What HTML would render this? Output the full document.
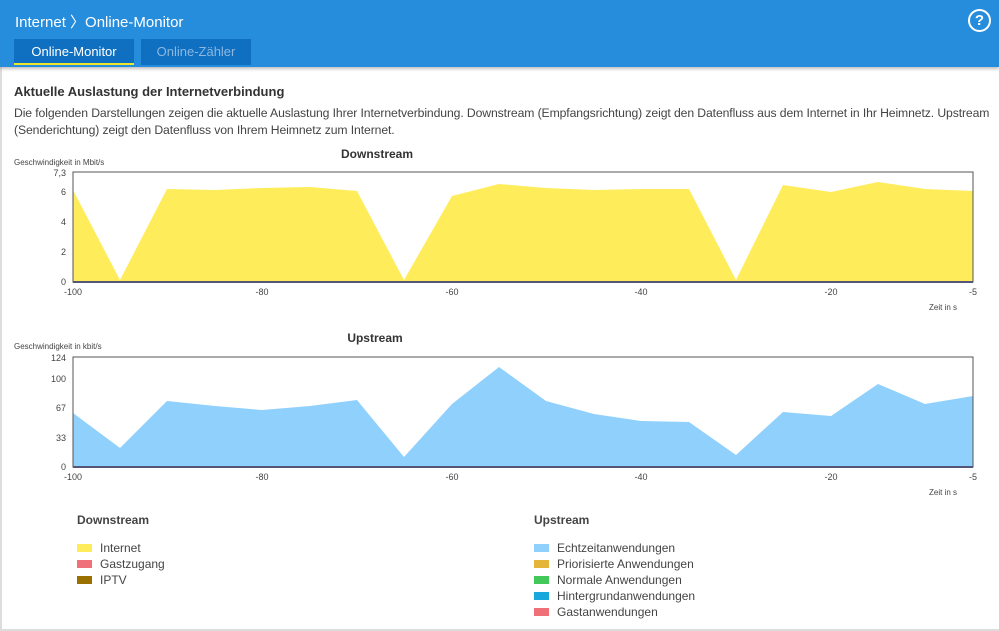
<!DOCTYPE html>
<html><head><meta charset="utf-8"><style>
body{margin:0;width:999px;height:631px;overflow:hidden;background:#fff;font-family:"Liberation Sans",sans-serif;color:#333;position:relative}
.hdr{position:absolute;left:0;top:0;width:999px;height:67px;background:#268ddd;box-shadow:0 2px 3px rgba(0,0,0,.25)}
.title{position:absolute;left:15px;top:11px;color:#fff;font-size:15px}
.tab{position:absolute;top:39px;height:26px;background:#0f6fc1;color:#fff;font-size:13px;text-align:center;line-height:25px}
.t1{left:14px;width:120px;border-bottom:2px solid #f0e72a;height:24px}
.t2{left:141px;width:110px;color:#8cb8e0}
.help{position:absolute;left:968px;top:9px;width:19px;height:19px;border:2px solid #fff;border-radius:50%;color:#fff;font-weight:bold;font-size:15px;text-align:center;line-height:19px}
h1{position:absolute;left:14px;top:84px;margin:0;font-size:13px;font-weight:bold}
p{position:absolute;left:14px;top:105px;margin:0;font-size:12.2px;line-height:17px;color:#444;white-space:nowrap;letter-spacing:-0.1px}
.lg{position:absolute;font-size:12px;color:#444}
.lg b{display:block;margin-bottom:13px}
.lg div{height:16px;line-height:16px}
.lg i{display:inline-block;width:15px;height:8px;margin-right:8px;vertical-align:0}
.frame{position:absolute;left:0;top:67px;width:997px;height:562px;border-left:2px solid #ddd;border-bottom:2px solid #ddd;box-sizing:content-box}
</style></head><body>
<div class="frame"></div>
<div class="hdr"><div class="title">Internet 〉Online-Monitor</div>
<div class="tab t1">Online-Monitor</div><div class="tab t2">Online-Zähler</div>
<div class="help">?</div></div>
<h1>Aktuelle Auslastung der Internetverbindung</h1>
<p>Die folgenden Darstellungen zeigen die aktuelle Auslastung Ihrer Internetverbindung. Downstream (Empfangsrichtung) zeigt den Datenfluss aus dem Internet in Ihr Heimnetz. Upstream<br>(Senderichtung) zeigt den Datenfluss von Ihrem Heimnetz zum Internet.</p>
<svg style="position:absolute;left:0;top:0" width="999" height="631" font-family="Liberation Sans, sans-serif" font-size="9" fill="#444">
<text x="377" y="158" font-size="12" font-weight="bold" text-anchor="middle" fill="#333">Downstream</text>
<text x="14" y="165" font-size="8">Geschwindigkeit in Mbit/s</text>
<polygon fill="#ffec5a" points="73,282 73,190 120,280 167,189 215,190 262,188 310,187 357,191 404,280 452,196 499,184 546,188 594,190 641,189 689,189 736,280 783,185 831,192 878,182 925,189 973,191 973,282"/>
<rect x="73" y="172" width="900" height="110" fill="none" stroke="#555" stroke-width="1"/>
<line x1="73" y1="282" x2="973" y2="282" stroke="#557" stroke-width="2"/>
<g text-anchor="end"><text x="66" y="176">7,3</text><text x="66" y="195">6</text><text x="66" y="225">4</text><text x="66" y="255">2</text><text x="66" y="285">0</text></g>
<g text-anchor="middle"><text x="73" y="295">-100</text><text x="262" y="295">-80</text><text x="452" y="295">-60</text><text x="641" y="295">-40</text><text x="831" y="295">-20</text><text x="973" y="295">-5</text></g>
<text x="957" y="310" font-size="8" text-anchor="end">Zeit in s</text>
<text x="375" y="342" font-size="12" font-weight="bold" text-anchor="middle" fill="#333">Upstream</text>
<text x="14" y="349" font-size="8">Geschwindigkeit in kbit/s</text>
<polygon fill="#8fd0fd" points="73,467 73,413 120,448 167,401 215,406 262,410 310,406 357,400 404,457 452,404 499,367 546,401 594,414 641,421 689,422 736,455 783,412 831,416 878,384 925,404 973,396 973,467"/>
<rect x="73" y="357" width="900" height="110" fill="none" stroke="#555" stroke-width="1"/>
<line x1="73" y1="467" x2="973" y2="467" stroke="#557" stroke-width="2"/>
<g text-anchor="end"><text x="66" y="361">124</text><text x="66" y="382">100</text><text x="66" y="411">67</text><text x="66" y="441">33</text><text x="66" y="470">0</text></g>
<g text-anchor="middle"><text x="73" y="480">-100</text><text x="262" y="480">-80</text><text x="452" y="480">-60</text><text x="641" y="480">-40</text><text x="831" y="480">-20</text><text x="973" y="480">-5</text></g>
<text x="957" y="495" font-size="8" text-anchor="end">Zeit in s</text>
</svg>
<div class="lg" style="left:77px;top:513px"><b>Downstream</b>
<div><i style="background:#ffec5a"></i>Internet</div><div><i style="background:#f0707a"></i>Gastzugang</div><div><i style="background:#9a7000"></i>IPTV</div></div>
<div class="lg" style="left:534px;top:513px"><b>Upstream</b>
<div><i style="background:#8fd0fd"></i>Echtzeitanwendungen</div><div><i style="background:#e5b53a"></i>Priorisierte Anwendungen</div><div><i style="background:#44c85a"></i>Normale Anwendungen</div><div><i style="background:#1aa8dc"></i>Hintergrundanwendungen</div><div><i style="background:#f0707a"></i>Gastanwendungen</div></div>
</body></html>
